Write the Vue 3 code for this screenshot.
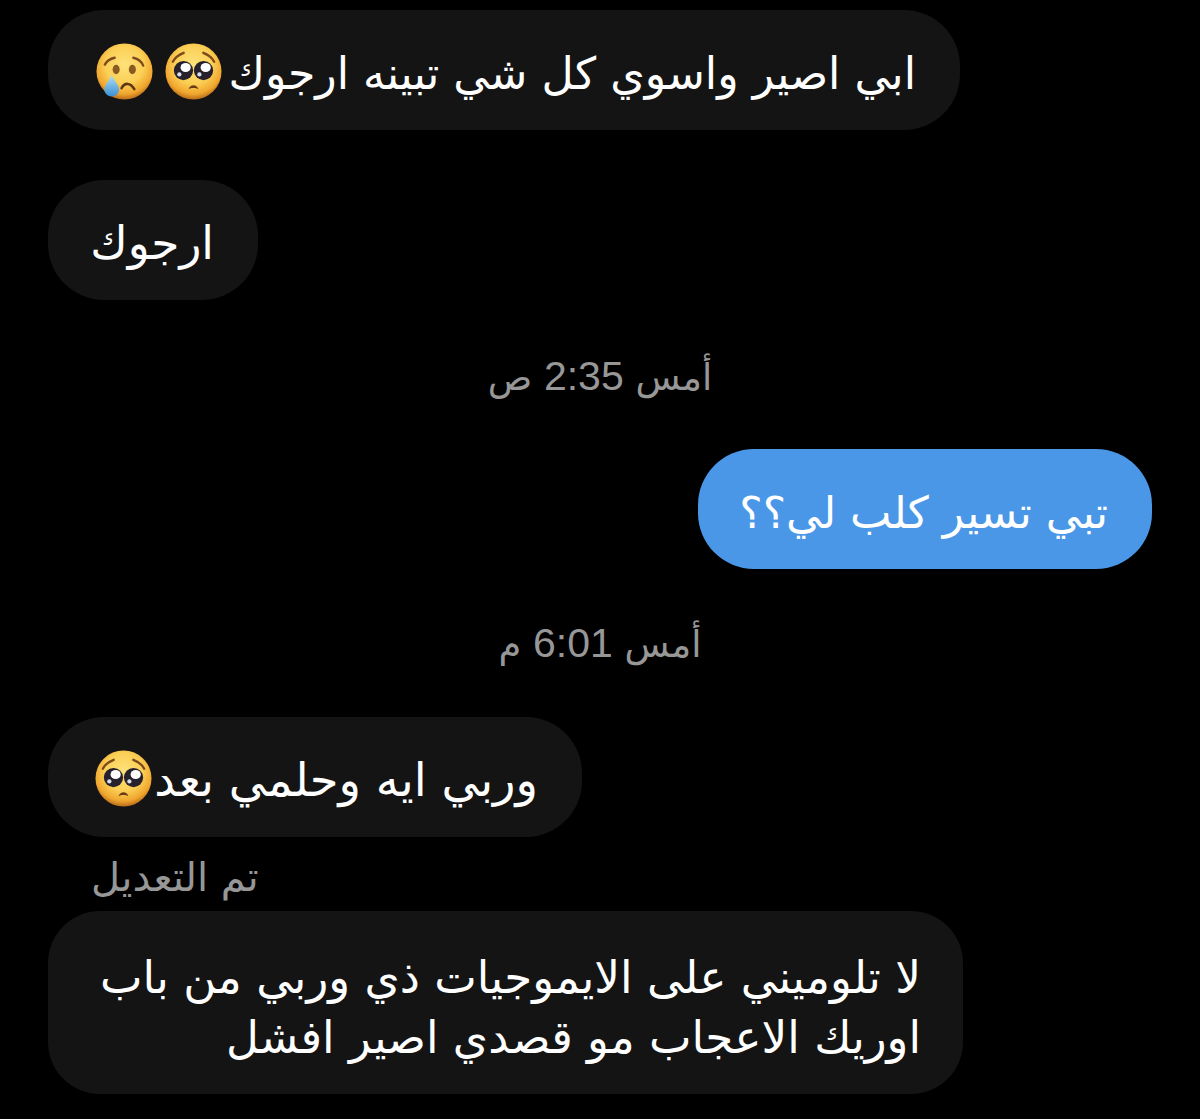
<template>
  <div class="chat" dir="rtl">
    <div class="bubble b1">
      <span>ابي اصير واسوي كل شي تبينه ارجوك</span>
      <svg class="emoji first" viewBox="0 0 58 58"><use href="#pleading" /></svg>
      <svg class="emoji" viewBox="0 0 58 58"><use href="#crying" /></svg>
    </div>
    <div class="bubble b2"><span>ارجوك</span></div>
    <div class="stamp s1">أمس <span class="time">2:35</span> ص</div>
    <div class="bubble mine"><span>تبي تسير كلب لي؟؟</span></div>
    <div class="stamp s2">أمس <span class="time">6:01</span> م</div>
    <div class="bubble b3">
      <span>وربي ايه وحلمي بعد</span>
      <svg class="emoji" viewBox="0 0 58 58"><use href="#pleading" /></svg>
    </div>
    <div class="edited">تم التعديل</div>
    <div class="bubble b4">
      <span>لا تلوميني على الايموجيات ذي وربي من باب<br />اوريك الاعجاب مو قصدي اصير افشل</span>
    </div>

    <svg class="defs" width="0" height="0">
      <defs>
        <radialGradient id="face" cx="50%" cy="38%" r="62%">
          <stop offset="0" stop-color="#fde27a" />
          <stop offset="0.55" stop-color="#fbcf55" />
          <stop offset="0.84" stop-color="#f0a62e" />
          <stop offset="1" stop-color="#b96c1a" />
        </radialGradient>
        <linearGradient id="tear" x1="0" y1="0" x2="0" y2="1">
          <stop offset="0" stop-color="#b4e2f7" />
          <stop offset="1" stop-color="#3a8fd4" />
        </linearGradient>
        <g id="pleading">
          <circle cx="29" cy="29" r="28.5" fill="url(#face)" />
          <path d="M8 19 C10 15 14 12 19 10" fill="none" stroke="#7c4a1c" stroke-width="2.4" stroke-linecap="round" />
          <path d="M50 19 C48 15 44 12 39 10" fill="none" stroke="#7c4a1c" stroke-width="2.4" stroke-linecap="round" />
          <circle cx="18.8" cy="28" r="9.8" fill="#26212c" />
          <circle cx="39.2" cy="28" r="9.8" fill="#26212c" />
          <ellipse cx="21" cy="25" rx="5.2" ry="4.6" fill="#fff" />
          <ellipse cx="41.4" cy="25" rx="5.2" ry="4.6" fill="#fff" />
          <circle cx="14.6" cy="32" r="2.2" fill="#d6deea" />
          <circle cx="35" cy="32" r="2.2" fill="#d6deea" />
          <path d="M24 47 C25.5 41.5 32.5 41.5 34 47 C31.5 45.4 26.5 45.4 24 47 Z" fill="#6b3d17" />
        </g>
        <g id="crying">
          <circle cx="29" cy="29" r="28.5" fill="url(#face)" />
          <path d="M9 22 C11 18 14 16 19 15" fill="none" stroke="#7c4a1c" stroke-width="2.4" stroke-linecap="round" />
          <path d="M48 23 C46 18 43 16 38 15" fill="none" stroke="#7c4a1c" stroke-width="2.4" stroke-linecap="round" />
          <ellipse cx="20.5" cy="27" rx="3.6" ry="4.8" fill="#8a5a20" />
          <ellipse cx="37" cy="27" rx="3.6" ry="4.8" fill="#8a5a20" />
          <path d="M26 46 C29 40 35 40 39 47" fill="none" stroke="#5e3414" stroke-width="2.6" stroke-linecap="round" />
          <path d="M16 32 C17.5 38 23.5 42 23.5 47.5 A7.5 7 0 0 1 8.5 47.5 C8.5 42 14.5 38 16 32 Z" fill="url(#tear)" />
        </g>
      </defs>
    </svg>
  </div>
</template>

<script setup>
</script>

<style>
html, body {
  margin: 0;
  background: #000;
}
</style>

<style scoped>
.chat {
  width: 1200px;
  height: 1119px;
  overflow: hidden;
  background: #000;
  display: flex;
  flex-direction: column;
  padding-top: 10px;
  box-sizing: border-box;
  font-family: "DejaVu Sans", sans-serif;
  font-size: 44.3px;
  color: #fff;
}

.bubble {
  box-sizing: border-box;
  height: 120px;
  border-radius: 56px;
  background: #141414;
  display: flex;
  align-items: center;
  align-self: flex-end;
  margin-left: 48px;
  padding: 6px 44px 0;
  white-space: nowrap;
}

.b1 { width: 912px; }
.b2 { width: 210px; margin-top: 50px; font-size: 45.5px; }
.b3 { width: 534px; font-size: 46.5px; }

.mine {
  width: 454px;
  align-self: flex-start;
  margin-left: 0;
  margin-right: 48px;
  background: #4a97e8;
  font-size: 44px;
}

.b4 {
  width: 915px;
  height: 183px;
  border-radius: 52px;
  font-size: 45.2px;
  line-height: 60px;
  padding: 11px 42px 0;
}

.emoji {
  width: 57px;
  height: 57px;
  flex: none;
  margin-top: -3px;
  margin-right: 2px;
}

.emoji.first {
  margin-right: 7px;
}

.emoji + .emoji {
  margin-right: 12px;
}

.stamp {
  height: 40px;
  color: #979797;
  font-size: 36.8px;
  line-height: 40px;
  text-align: center;
}

.time {
  font-family: "Liberation Sans", sans-serif;
  font-size: 41px;
}

.s1 { margin-top: 56px; margin-bottom: 53px; }
.s2 { margin-top: 54px; margin-bottom: 54px; }

.edited {
  color: #979797;
  font-size: 40px;
  line-height: 40px;
  align-self: flex-end;
  margin-left: 91px;
  margin-top: 20px;
  margin-bottom: 14px;
}

.defs {
  position: absolute;
}
</style>
